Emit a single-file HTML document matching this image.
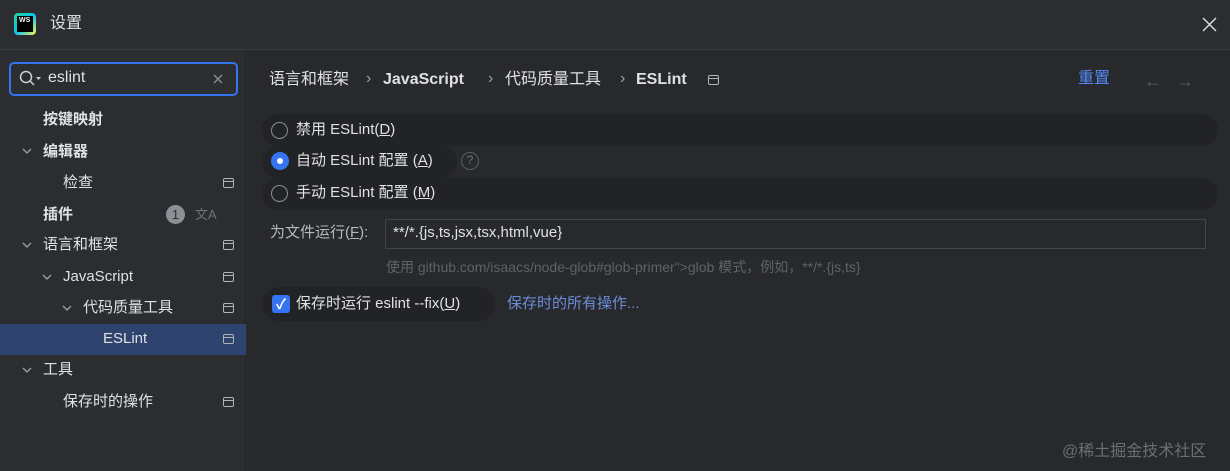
<!DOCTYPE html>
<html><head><meta charset="utf-8"><style>
*{margin:0;padding:0;box-sizing:border-box}
body{width:1230px;height:471px;background:#2b2d30;font-family:"Liberation Sans","Noto Sans CJK SC",sans-serif;color:#dfe1e5;font-size:15px;line-height:20px;position:relative;overflow:hidden}
.a{position:absolute;white-space:nowrap}
.title{top:0;left:0;width:1230px;height:50px;border-bottom:1px solid #393b40;background:#2b2d30}
.side{top:51px;left:0;width:246px;height:420px;background:#2b2d30;border-right:1px solid #232427}
.main{top:51px;left:247px;width:983px;height:420px;background:#28292c}
.ic{width:11px;height:10px;border:1.5px solid #b0b3b8;border-radius:2px}
.ic::after{content:"";position:absolute;left:0;right:0;top:2px;border-top:1.5px solid #b0b3b8}
.hl{background:#222326;border-radius:16px;height:32px}
.rad{width:17px;height:17px;border:1.5px solid #8c8f95;border-radius:50%}
u{text-decoration:underline}
.bc{font-size:16px;top:70px}
.bb{font-weight:bold}
.sep{color:#9da0a8;font-size:16px;top:69px}
</style></head><body>
<div class="a title"></div>
<div class="a" style="left:14px;top:13px;width:22px;height:22px;border-radius:4px;background:linear-gradient(135deg,#21d789,#07c3f2 50%,#fcf84a);"><div style="position:absolute;left:3px;top:3px;width:16px;height:16px;background:#000;color:#fff;font-size:7px;line-height:8px;font-weight:bold;padding:1px 2px">WS</div></div>
<div class="a" style="left:50px;top:14px;font-size:16px">设置</div>
<svg class="a" style="left:1202px;top:17px" width="15" height="15"><path d="M1 1L14 14M14 1L1 14" stroke="#dfe1e5" stroke-width="1.4"/></svg>
<div class="a side"></div>
<div class="a main"></div>
<div class="a" style="left:9px;top:62px;width:229px;height:34px;border:2px solid #3574f0;border-radius:5px;background:#2b2d30"></div>
<svg class="a" style="left:19px;top:70px" width="24" height="18"><circle cx="7" cy="7" r="5.5" stroke="#ced0d6" stroke-width="1.5" fill="none"/><line x1="11" y1="11" x2="15" y2="15" stroke="#ced0d6" stroke-width="1.5"/><path d="M17 7h5l-2.5 3z" fill="#ced0d6"/></svg>
<div class="a" style="left:48px;top:68px;font-size:16px">eslint</div>
<svg class="a" style="left:213px;top:74px" width="10" height="10"><path d="M1 1L9 9M9 1L1 9" stroke="#8c8f95" stroke-width="1.3"/></svg>
<svg width="0" height="0" style="position:absolute"><defs><path id="ch" d="M1 1L5 5L9 1" stroke="#9da0a8" stroke-width="1.3" fill="none"/></defs></svg>
<div class="a" style="left:43px;top:110px;font-weight:bold">按键映射</div>
<svg class="a" style="left:22px;top:148px" width="10" height="7"><use href="#ch"/></svg><div class="a" style="left:43px;top:142px;font-weight:bold">编辑器</div>
<div class="a" style="left:63px;top:173px">检查</div><div class="a ic" style="left:223px;top:178px"></div>
<div class="a" style="left:43px;top:205px;font-weight:bold">插件</div>
<div class="a" style="left:166px;top:205px;width:19px;height:19px;border-radius:50%;background:#8c8f95;color:#2b2d30;font-size:13px;text-align:center;line-height:19px">1</div>
<div class="a" style="left:195px;top:205px;color:#6f737a;font-size:13px">文A</div>
<svg class="a" style="left:22px;top:242px" width="10" height="7"><use href="#ch"/></svg><div class="a" style="left:43px;top:235px">语言和框架</div><div class="a ic" style="left:223px;top:240px"></div>
<svg class="a" style="left:42px;top:274px" width="10" height="7"><use href="#ch"/></svg><div class="a" style="left:63px;top:267px">JavaScript</div><div class="a ic" style="left:223px;top:272px"></div>
<svg class="a" style="left:62px;top:305px" width="10" height="7"><use href="#ch"/></svg><div class="a" style="left:83px;top:298px">代码质量工具</div><div class="a ic" style="left:223px;top:303px"></div>
<div class="a" style="left:0;top:324px;width:246px;height:31px;background:#2e436e"></div>
<div class="a" style="left:103px;top:329px">ESLint</div><div class="a ic" style="left:223px;top:334px"></div>
<svg class="a" style="left:22px;top:367px" width="10" height="7"><use href="#ch"/></svg><div class="a" style="left:43px;top:360px">工具</div>
<div class="a" style="left:63px;top:392px">保存时的操作</div><div class="a ic" style="left:223px;top:397px"></div>
<div class="a bc" style="left:269px">语言和框架</div>
<div class="a sep" style="left:366px">›</div>
<div class="a bc bb" style="left:383px">JavaScript</div>
<div class="a sep" style="left:488px">›</div>
<div class="a bc" style="left:505px">代码质量工具</div>
<div class="a sep" style="left:620px">›</div>
<div class="a bc bb" style="left:636px">ESLint</div>
<div class="a ic" style="left:708px;top:75px"></div>
<div class="a" style="left:1078px;top:69px;color:#548af7;font-size:16px">重置</div>
<div class="a" style="left:1144px;top:71px;color:#5a5d63;font-size:18px">←</div>
<div class="a" style="left:1176px;top:71px;color:#5a5d63;font-size:18px">→</div>
<div class="a hl" style="left:262px;top:114px;width:956px"></div>
<div class="a hl" style="left:262px;top:146px;width:195px"></div>
<div class="a hl" style="left:262px;top:178px;width:956px"></div>
<div class="a rad" style="left:271px;top:122px"></div>
<div class="a" style="left:296px;top:120px">禁用 ESLint(<u>D</u>)</div>
<div class="a" style="left:271px;top:152px;width:18px;height:18px;border-radius:50%;background:#3574f0"><div style="position:absolute;left:6px;top:6px;width:6px;height:6px;border-radius:50%;background:#fff"></div></div>
<div class="a" style="left:296px;top:151px">自动 ESLint 配置 (<u>A</u>)</div>
<div class="a" style="left:461px;top:152px;width:18px;height:18px;border:1.5px solid #5a5d63;border-radius:50%;color:#6f737a;font-size:12px;text-align:center;line-height:15px">?</div>
<div class="a rad" style="left:271px;top:185px"></div>
<div class="a" style="left:296px;top:183px">手动 ESLint 配置 (<u>M</u>)</div>
<div class="a" style="left:270px;top:223px;color:#b5b8bd">为文件运行(<u>F</u>):</div>
<div class="a" style="left:385px;top:219px;width:821px;height:30px;border:1px solid #43454a;background:#28292c"></div>
<div class="a" style="left:393px;top:223px">**/*.{js,ts,jsx,tsx,html,vue}</div>
<div class="a" style="left:386px;top:257px;color:#5f6268;font-size:14px">使用 github.com/isaacs/node-glob#glob-primer"&gt;glob 模式，例如，**/*.{js,ts}</div>
<div class="a hl" style="left:262px;top:287px;width:233px;height:34px;border-radius:17px"></div>
<div class="a" style="left:272px;top:295px;width:18px;height:18px;border-radius:3px;background:#3574f0;color:#fff;font-size:14px;text-align:center;line-height:18px;font-weight:bold">✓</div>
<div class="a" style="left:296px;top:294px">保存时运行 eslint --fix(<u>U</u>)</div>
<div class="a" style="left:507px;top:294px;color:#6b8dd8">保存时的所有操作...</div>
<div class="a" style="left:1062px;top:442px;color:#6b6e73;font-size:16px">@稀土掘金技术社区</div>
</body></html>
